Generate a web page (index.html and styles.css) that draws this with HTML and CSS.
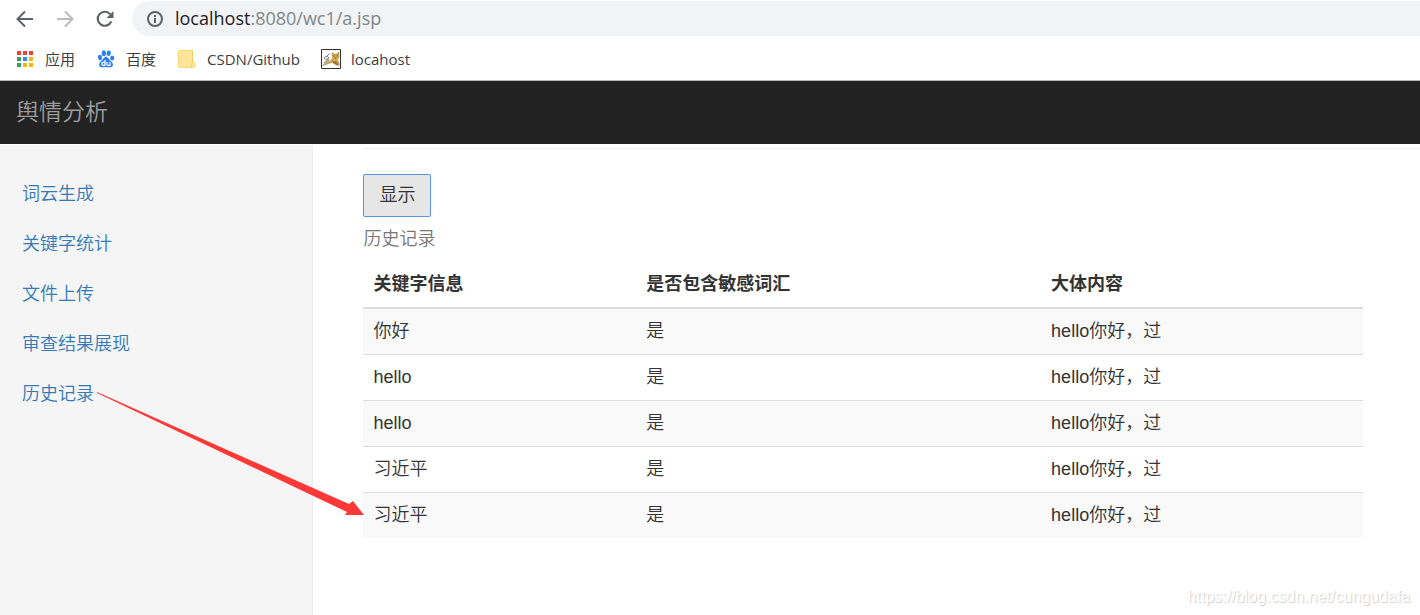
FILE: index.html
```html
<!DOCTYPE html>
<html lang="zh-CN">
<head>
<meta charset="utf-8">
<title>舆情分析</title>
<link rel="stylesheet" href="styles.css">
</head>
<body>
<header class="browser">
  <div class="toolbar">
    <button class="tool" type="button" aria-label="Back">
      <svg width="20" height="20" viewBox="0 0 20 20" fill="none" stroke="#5f6368" stroke-width="2"><path d="M18 10H3M10 2.500L2.500 10L10 17.500"/></svg>
    </button>
    <button class="tool" type="button" aria-label="Forward">
      <svg width="20" height="20" viewBox="0 0 20 20" fill="none" stroke="#babcbe" stroke-width="2"><path d="M2 10H17M10 2.500L17.500 10L10 17.500"/></svg>
    </button>
    <button class="tool" type="button" aria-label="Reload">
      <svg width="20" height="20" viewBox="0 0 20 20" fill="none"><path d="M16.300 12.300A7 7 0 1 1 15.200 5.300" stroke="#5f6368" stroke-width="2.200"/><path d="M18.500 2V9H11.500Z" fill="#5f6368"/></svg>
    </button>
    <div class="address">
      <svg width="18" height="18" viewBox="0 0 18 18" fill="none"><circle cx="9" cy="9" r="7" stroke="#5f6368" stroke-width="2"/><path d="M9 8V13M9 5V7" stroke="#5f6368" stroke-width="2"/></svg>
      <span class="url"><span class="host">localhost</span>:8080/wc1/a.jsp</span>
    </div>
  </div>
  <nav class="bookmarks">
    <a class="bookmark" href="#">
      <svg width="20" height="20" viewBox="0 0 20 20"><g fill="#f44336"><path d="M2 2h4v4H2zM8 2h4v4H8zM14 2h4v4h-4z"/></g><g fill="#34a060"><path d="M2 8h4v4H2zM2 14h4v4H2z"/></g><path fill="#2f8ef5" d="M8 8h4v4H8z"/><path fill="#fbb605" d="M14 8h4v4h-4zM8 14h4v4H8zM14 14h4v4h-4z"/></svg>
      <span>应用</span>
    </a>
    <a class="bookmark" href="#">
      <svg width="20" height="20" viewBox="0 0 20 20"><g fill="#2f80f7"><ellipse cx="4" cy="8.500" rx="2.100" ry="2.700" transform="rotate(-12 4 8.500)"/><ellipse cx="7.800" cy="4.200" rx="2.100" ry="2.900"/><ellipse cx="12.700" cy="4.300" rx="2.100" ry="2.800" transform="rotate(12 12.700 4.300)"/><ellipse cx="16.200" cy="9" rx="2.100" ry="2.600"/><path d="M10 8C7.500 8 7.300 10.400 5.200 12C3.200 13.500 2.700 15 3.300 16.700C4.200 19.200 7.400 18 10 18C12.700 18 15.900 19.200 16.800 16.700C17.400 14.800 16.500 13.500 14.700 12C12.700 10.400 12.500 8 10 8Z"/></g><path d="M9 11V16.300H7.200C5.200 16.300 5.200 13.300 7.200 13.300H9M11 13V15.200C11 16.300 11.500 16.300 12.200 16.300H14V13" fill="none" stroke="#fff" stroke-width="1.200"/></svg>
      <span>百度</span>
    </a>
    <a class="bookmark" href="#">
      <svg width="20" height="20" viewBox="0 0 20 20"><path d="M2.500 1.500h13v12h1.500q1 0 1 1v2q0 2-2 2H2.500q-1 0-1-1v-15q0-1 1-1z" fill="#ffe69a" stroke="#f8d775"/><path d="M14.500 18v-3.500q0-1 1-1h1.500M15.500 2v12" fill="none" stroke="#f3cc59"/></svg>
      <span>CSDN/Github</span>
    </a>
    <a class="bookmark" href="#">
      <svg width="20" height="20" viewBox="0 0 20 20"><path d="M.5.5h19v19H.5z" fill="#fff" stroke="#333"/><path d="M1.500 16.500L6 13L10 11.500L11.500 9L11 3.500L13 5H15.500L18 3V8L16.500 10.500L18.500 15.500L13.500 13L9 14L5 15.500Z" fill="#d5a94f" stroke="#a58038" stroke-width=".5"/><path d="M11 12.500L14.500 12L18.500 16.500H16L12.500 14.500Z" fill="#a97527"/><path d="M8 11C3.500 12 2 8.500 4.500 7.500Q7 6.500 8 9M6 7L8.500 4.500M5 10H8.500M3 14L6 12" fill="none" stroke="#666" stroke-width=".9"/><path d="M12.500 7h1M15.500 7h1M14 9h1" stroke="#443c28"/></svg>
      <span>locahost</span>
    </a>
  </nav>
</header>
<div class="navbar"><a class="brand" href="#">舆情分析</a></div>
<div class="layout">
  <nav class="sidebar">
    <a href="#">词云生成</a>
    <a href="#">关键字统计</a>
    <a href="#">文件上传</a>
    <a href="#">审查结果展现</a>
    <a href="#">历史记录</a>
  </nav>
  <main class="content">
    <hr class="rule">
    <div class="panel">
      <button class="show" type="button">显示</button>
      <table class="records">
        <caption>历史记录</caption>
        <colgroup><col class="col-key"><col class="col-flag"><col></colgroup>
        <thead><tr><th scope="col">关键字信息</th><th scope="col">是否包含敏感词汇</th><th scope="col">大体内容</th></tr></thead>
        <tbody>
          <tr><td>你好</td><td>是</td><td>hello你好，过</td></tr>
          <tr><td>hello</td><td>是</td><td>hello你好，过</td></tr>
          <tr><td>hello</td><td>是</td><td>hello你好，过</td></tr>
          <tr><td>习近平</td><td>是</td><td>hello你好，过</td></tr>
          <tr><td>习近平</td><td>是</td><td>hello你好，过</td></tr>
        </tbody>
      </table>
    </div>
  </main>
</div>
<svg class="arrow" width="270" height="126" viewBox="0 0 270 126" aria-hidden="true"><path d="M1 1L1 2L251 121L249 124H268L257 110L253 113Z" fill="#fd3938"/></svg>
<div class="watermark">https://blog.csdn.net/cungudafa</div>
</body>
</html>
```
FILE: styles.css
```css
* {
  box-sizing: border-box;
}

body {
  margin: 0;
  min-height: 100vh;
  display: flex;
  flex-direction: column;
  position: relative;
  background: #fff;
  color: #333;
  font: 350 18px/25px "Liberation Sans", "Noto Sans CJK SC", sans-serif;
}

a {
  color: #337ab7;
  text-decoration: none;
}

svg {
  display: block;
  flex: none;
}

.browser {
  font-family: "Open Sans", "Noto Sans CJK SC", sans-serif;
  font-weight: 400;
  border-bottom: 1px solid #b6b8ba;
}

.toolbar {
  display: flex;
  align-items: center;
  gap: 20px;
  padding: 1px 0 0 15px;
}

.tool {
  padding: 0;
  border: 0;
  background: none;
}

.address {
  flex: 1;
  display: flex;
  align-items: center;
  gap: 11px;
  height: 35px;
  margin-left: -3px;
  padding-left: 14px;
  border-radius: 18px 0 0 18px;
  background: #f1f3f4;
}

.url {
  color: #80868b;
}

.host {
  color: #202124;
}

.bookmarks {
  display: flex;
  gap: 21px;
  height: 44px;
  padding: 2px 15px 0;
}

.bookmark {
  display: flex;
  align-items: center;
  gap: 10px;
  color: #3c4043;
  font-size: 15px;
}

.navbar {
  padding: 16px;
  background: #222;
}

.brand {
  display: block;
  color: #9d9d9d;
  font-size: 23px;
  line-height: 31px;
}

.layout {
  flex: 1;
  display: flex;
  padding-top: 1px;
}

.sidebar {
  flex: 0 0 auto;
  width: calc(22% + 1px);
  padding-top: 24px;
  background: #f5f5f5;
  border-right: 1px solid #eee;
}

.sidebar a {
  display: block;
  padding: 12px 22px;
  line-height: 26px;
}

.content {
  flex: 1;
  padding: 3px 0 0 50px;
}

.rule {
  margin: 0 0 25px;
  border: 0;
  border-top: 1px solid #eee;
}

.panel {
  padding-right: 57px;
}

.show {
  display: block;
  padding: 8px 15px;
  border: 1px solid #5b94e3;
  border-radius: 2px;
  background: #e6e6e6;
  color: #333;
  font: inherit;
}

.records {
  width: 100%;
  table-layout: fixed;
  border-spacing: 0;
}

.records caption {
  padding: 10px 0;
  color: #777;
  text-align: left;
}

.col-key {
  width: 27.3%;
}

.col-flag {
  width: 40.5%;
}

.records th,
.records td {
  padding: 10px;
  text-align: left;
}

.records th {
  border-bottom: 2px solid #ddd;
}

.records tr + tr td {
  border-top: 1px solid #ddd;
}

.records tbody tr:nth-child(odd) {
  background: #f9f9f9;
}

.arrow {
  position: absolute;
  left: 96px;
  top: 391px;
}

.watermark {
  position: absolute;
  right: 10px;
  bottom: 6px;
  color: #fff;
  font-size: 16px;
  text-shadow: 1px 1px 1px #ccc;
}
```
